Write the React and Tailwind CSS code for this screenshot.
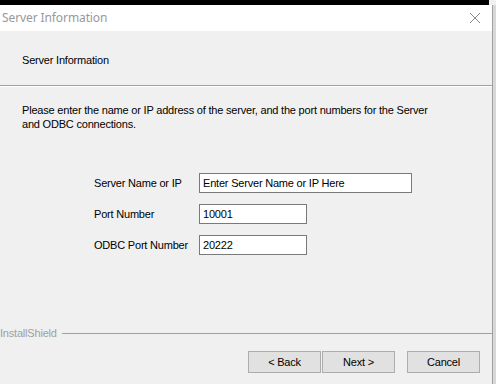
export default function App() {
  const font = { fontFamily: '"Liberation Sans", Arial, sans-serif' };
  return (
    <div className="w-[496px] h-[384px] bg-[#f0f0f0] relative overflow-hidden text-[11px] text-black" style={font}>
      <div className="h-[5px] w-[489px] bg-black" />
      <div className="flex h-[379px]">
        <div className="flex-1 flex flex-col">
          {/* title bar */}
          <div className="h-[26px] bg-white flex items-center justify-between pl-[2px] pr-[10px]">
            <span className="text-[12px] text-[#999999] tracking-[-0.1px]" style={{ fontFamily: '"Noto Sans", "Liberation Sans", sans-serif' }}>Server Information</span>
            <svg width="12" height="12" viewBox="0 0 12 12" className="mr-[1px]">
              <path d="M1 1 L11 11 M11 1 L1 11" stroke="#8a8a8a" strokeWidth="1" />
            </svg>
          </div>
          {/* header */}
          <div className="h-[55px] flex items-center pt-[5px] pl-[22px] border-b border-[#a0a0a0] tracking-[-0.2px]">
            Server Information
          </div>
          <div className="h-px bg-white" />
          {/* body */}
          <div className="pl-[22px] pt-[16px] leading-[14px] tracking-[-0.2px]">
            <div>Please enter the name or IP address of the server, and the port numbers for the Server</div>
            <div>and ODBC connections.</div>
          </div>
          <div className="mt-[42px] pl-[94px] flex flex-col gap-[11px] tracking-[-0.2px]">
            <div className="flex items-center">
              <span className="w-[105px]">Server Name or IP</span>
              <div className="w-[213px] h-[20px] bg-white border border-[#7a7a7a] flex items-center pl-[3px]">Enter Server Name or IP Here</div>
            </div>
            <div className="flex items-center">
              <span className="w-[105px]">Port Number</span>
              <div className="w-[108px] h-[20px] bg-white border border-[#7a7a7a] flex items-center pl-[3px]">10001</div>
            </div>
            <div className="flex items-center">
              <span className="w-[105px]">ODBC Port Number</span>
              <div className="w-[108px] h-[20px] bg-white border border-[#7a7a7a] flex items-center pl-[3px]">20222</div>
            </div>
          </div>
          <div className="mt-[72px] h-[13px] flex items-center">
            <span className="text-[#a0a0a0] tracking-[-0.2px]">InstallShield</span>
            <div className="flex-1 h-px bg-[#a0a0a0] ml-[5px]" />
          </div>
          <div className="mt-[11px] flex pl-[248px] tracking-[-0.2px]">
            <button className="w-[73px] h-[22px] bg-[#e1e1e1] border border-[#adadad]">&lt; Back</button>
            <button className="ml-[1px] w-[73px] h-[22px] bg-[#e1e1e1] border border-[#adadad]">Next &gt;</button>
            <button className="ml-[12px] w-[73px] h-[22px] bg-[#e1e1e1] border border-[#adadad]">Cancel</button>
          </div>
        </div>
        <div className="w-px bg-[#a0a0a0]" />
        <div className="w-[3px] bg-[#d8d8d8]" />
      </div>
    </div>
  );
}
